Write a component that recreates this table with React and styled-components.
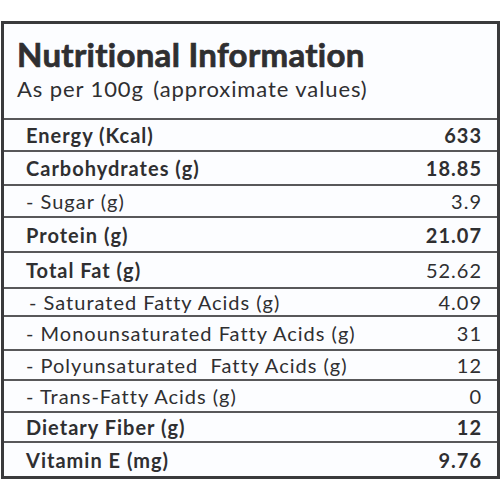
import React from 'react';
import styled, { createGlobalStyle } from 'styled-components';

const GlobalStyle = createGlobalStyle`
  html, body {
    margin: 0;
    padding: 0;
    background: #ffffff;
  }
  body {
    font-family: Lato, 'Liberation Sans', sans-serif;
    color: #2f2f31;
  }
`;

const rows = [
  { label: 'Energy (Kcal)', value: '633', bold: true, h: 32 },
  { label: 'Carbohydrates (g)', value: '18.85', bold: true, h: 34 },
  { label: '- Sugar (g)', value: '3.9', h: 32 },
  { label: 'Protein (g)', value: '21.07', bold: true, h: 35 },
  { label: 'Total Fat (g)', value: '52.62', bold: true, plainValue: true, h: 36 },
  { label: '- Saturated Fatty Acids (g)', value: '4.09', indent: 3, h: 28 },
  { label: '- Monounsaturated Fatty Acids (g)', value: '31', h: 34 },
  { label: '- Polyunsaturated  Fatty Acids (g)', value: '12', h: 30 },
  { label: '- Trans-Fatty Acids (g)', value: '0', h: 32 },
  { label: 'Dietary Fiber (g)', value: '12', bold: true, h: 30 },
  { label: 'Vitamin E (mg)', value: '9.76', bold: true, h: 35 },
];

const Nutrition = () => {
  return (
    <Page>
      <GlobalStyle />
      <Card>
        <Header>
          <Title>Nutritional Information</Title>
          <Subtitle>
            As per 100g <span>(approximate values)</span>
          </Subtitle>
        </Header>
        {rows.map((r) => (
          <Row key={r.label} $h={r.h}>
            <Label $bold={r.bold} $indent={r.indent}>
              {r.label}
            </Label>
            <Value $bold={r.bold && !r.plainValue}>{r.value}</Value>
          </Row>
        ))}
      </Card>
    </Page>
  );
};

const Page = styled.div`
  width: 500px;
  height: 500px;
  padding-top: 21px;
  box-sizing: border-box;
`;

const Card = styled.div`
  margin-left: 1px;
  width: 499px;
  box-sizing: border-box;
  border: 3px solid #3a3a3c;
  background: #fcfdff;
`;

const Header = styled.div`
  height: 94px;
  box-sizing: border-box;
  padding: 10px 0 0 13px;
`;

const Title = styled.h1`
  margin: 0;
  font-size: 33px;
  line-height: 40px;
  font-weight: 700;
  letter-spacing: 0.3px;
  -webkit-text-stroke: 0.7px #2f2f31;
  color: #2f2f31;
`;

const Subtitle = styled.div`
  margin-top: 1px;
  font-size: 22px;
  line-height: 27px;
  letter-spacing: 0.9px;
  span {
    margin-left: 3px;
  }
`;

const Row = styled.div`
  height: ${(p) => p.$h}px;
  box-sizing: border-box;
  border-top: 2px solid #58585a;
  display: flex;
  align-items: center;
  justify-content: space-between;
  padding: 0 16px 0 22px;
  font-size: 20px;
  letter-spacing: 1px;
`;

const Label = styled.span`
  font-weight: ${(p) => (p.$bold ? 700 : 400)};
  white-space: pre;
  padding-left: ${(p) => p.$indent || 0}px;
`;

const Value = styled.span`
  font-weight: ${(p) => (p.$bold ? 700 : 400)};
  margin-right: -1px;
`;

export default Nutrition;
